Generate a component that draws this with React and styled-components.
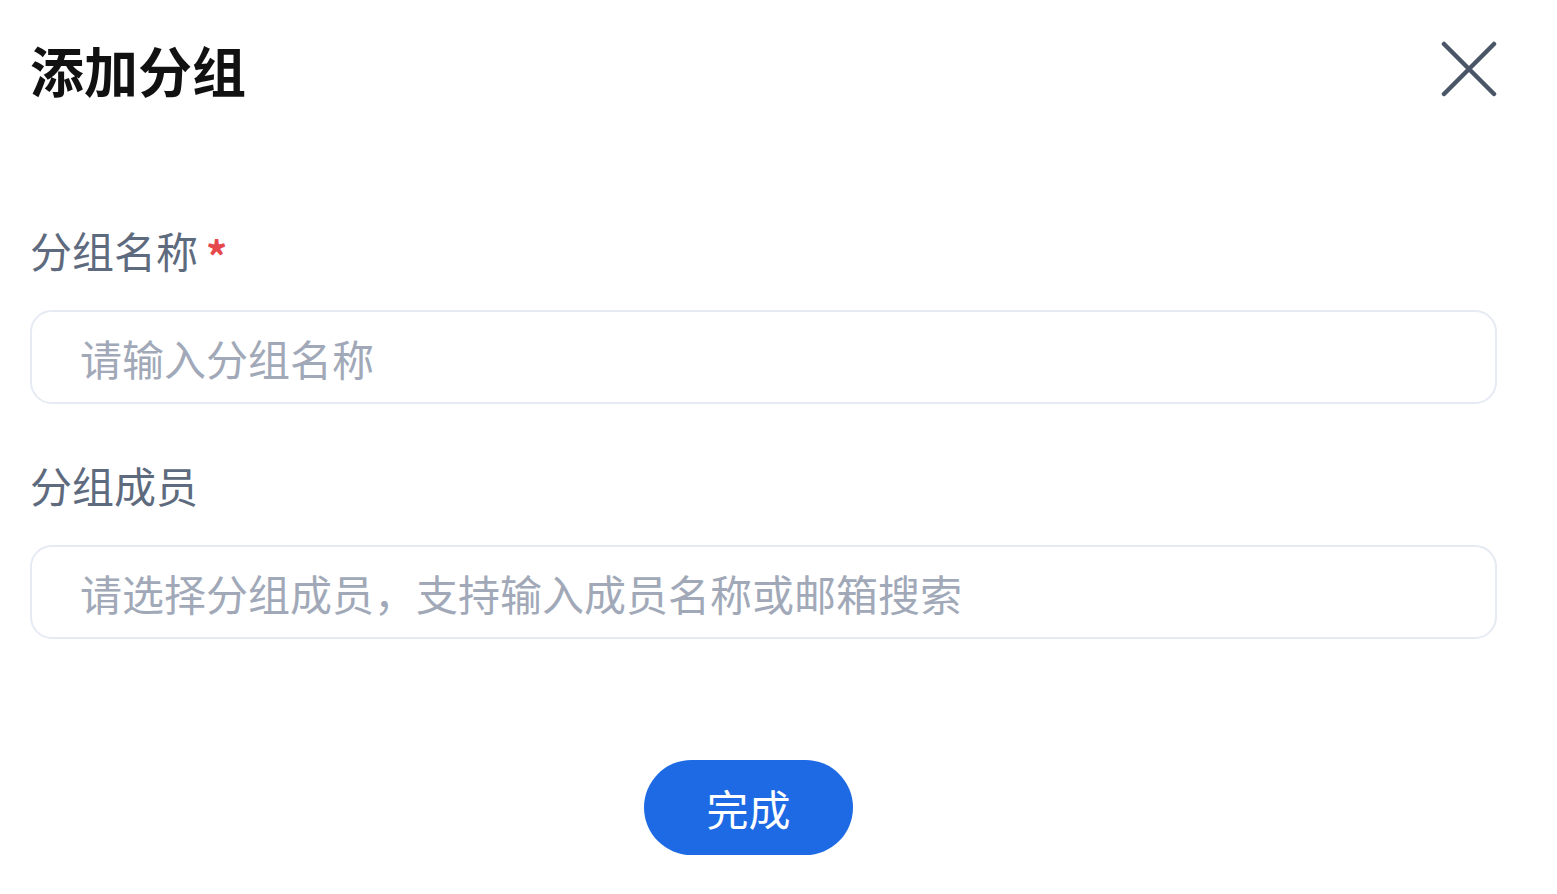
import React from "react";
import styled, { createGlobalStyle } from "styled-components";

const GlobalStyle = createGlobalStyle`
  html, body {
    margin: 0;
    padding: 0;
    background: #ffffff;
  }
  body {
    font-family: "Noto Sans CJK SC", "Noto Sans", sans-serif;
  }
`;

const Dialog = styled.div`
  width: 1557px;
  height: 894px;
  box-sizing: border-box;
  padding: 36px 60px 0 30px;
  display: flex;
  flex-direction: column;
`;

const Header = styled.div`
  display: flex;
  align-items: center;
  justify-content: space-between;
  height: 68px;
`;

const Title = styled.h1`
  margin: 0;
  font-size: 54px;
  line-height: 68px;
  font-weight: 700;
  color: #111111;
`;

const CloseButton = styled.button`
  border: none;
  background: none;
  padding: 0;
  margin-top: -2px;
  width: 56px;
  height: 56px;
  display: flex;
  align-items: center;
  justify-content: center;
  cursor: pointer;
`;

const Form = styled.div`
  display: flex;
  flex-direction: column;
  margin-top: 118px;
`;

const Label = styled.div`
  font-size: 42px;
  line-height: 56px;
  color: #5e6a7d;
  display: flex;
  align-items: center;
  margin-top: ${(p) => (p.$first ? "0" : "53px")};
`;

const Required = styled.span`
  color: #e5484d;
  font-size: 42px;
  line-height: 42px;
  margin-left: 8px;
  padding-top: 10px;
  font-weight: 700;
`;

const Input = styled.input`
  margin-top: 32px;
  height: 94px;
  box-sizing: border-box;
  width: 100%;
  border: 2px solid #e5eaf3;
  border-radius: 22px;
  padding: 0 48px;
  font-family: inherit;
  font-size: 42px;
  color: #333;
  outline: none;

  &::placeholder {
    color: #a1a9b8;
  }
`;

const Footer = styled.div`
  display: flex;
  justify-content: center;
  margin-top: 121px;
  padding-right: 30px;
`;

const PrimaryButton = styled.button`
  width: 209px;
  height: 95px;
  border: none;
  border-radius: 48px;
  background: #1e6ae5;
  color: #ffffff;
  font-family: inherit;
  font-size: 42px;
  cursor: pointer;
`;

const App = () => {
  return (
    <>
      <GlobalStyle />
      <Dialog>
        <Header>
          <Title>添加分组</Title>
          <CloseButton aria-label="关闭">
            <svg width="56" height="56" viewBox="0 0 56 56">
              <path
                d="M3 3L53 53M53 3L3 53"
                stroke="#4a5568"
                strokeWidth="4.5"
                strokeLinecap="round"
              />
            </svg>
          </CloseButton>
        </Header>

        <Form>
          <Label $first>
            分组名称<Required>*</Required>
          </Label>
          <Input placeholder="请输入分组名称" />

          <Label>分组成员</Label>
          <Input placeholder="请选择分组成员，支持输入成员名称或邮箱搜索" />
        </Form>

        <Footer>
          <PrimaryButton>完成</PrimaryButton>
        </Footer>
      </Dialog>
    </>
  );
};

export default App;
